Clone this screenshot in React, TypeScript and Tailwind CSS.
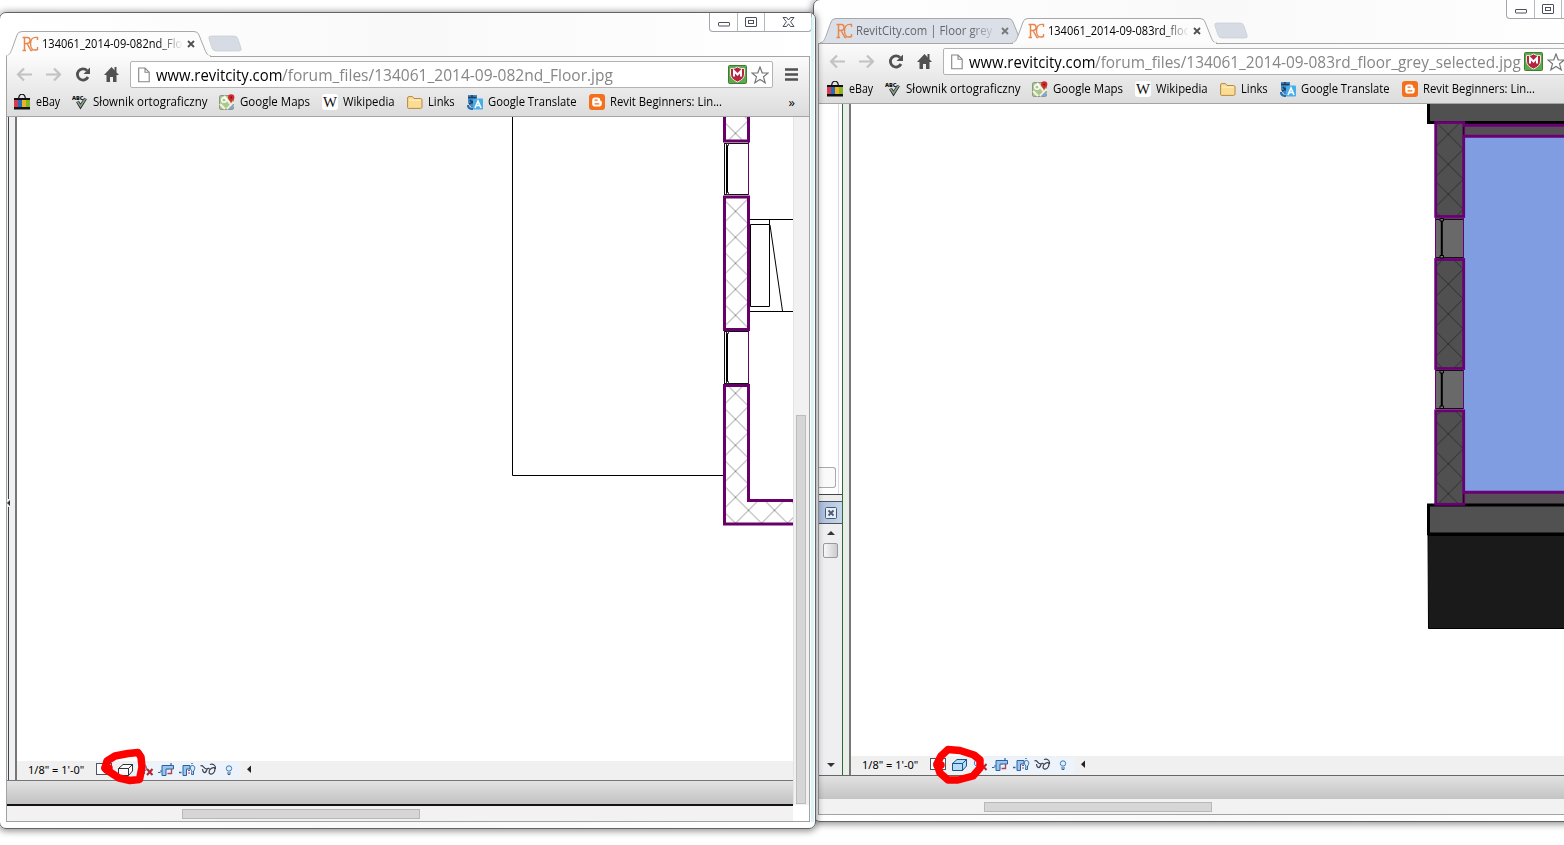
import { useLayoutEffect, useRef, useState } from "react";
import type { ReactNode } from "react";

/** Text squeezed or stretched horizontally to an exact width. */
function Fit({ w, children, className = "" }: { w: number; children: ReactNode; className?: string }) {
  const ref = useRef<HTMLSpanElement>(null);
  const [scale, setScale] = useState(1);
  useLayoutEffect(() => {
    if (ref.current && ref.current.offsetWidth) setScale(w / ref.current.offsetWidth);
  }, [w]);
  return (
    <span className={`block shrink-0 whitespace-nowrap ${className}`} style={{ width: w }}>
      <span ref={ref} className="inline-block origin-left" style={{ transform: `scaleX(${scale})` }}>
        {children}
      </span>
    </span>
  );
}

function RevitCityIcon() {
  return (
    <svg width="17" height="16" viewBox="0 0 17 16" className="shrink-0" fill="none" stroke="#e8874c">
      <path d="M2.5 1V15M.5 1.5H5.5C9 1.5 9 7.5 5 7.5H3M5 7.5L9 14.5H10.5M.5 14.5H4" strokeWidth="1.5" />
      <path d="M15.5 4V1.5C10 .5 8.5 4 8.5 8C8.5 13 11 15 15.5 13.5V11" strokeWidth="1.4" />
    </svg>
  );
}

function Tab({ title, w, textW, active, first }: { title: string; w: number; textW: number; active: boolean; first: boolean }) {
  const d = `M0 25C4 24 4 22 6 18L11 4Q12 .5 16 .5H${w - 17}Q${w - 13} .5 ${w - 12} 4L${w - 6} 19C${w - 4} 24 ${w - 3} 24.5 ${w} 25`;
  return (
    <div className={`relative h-[25px] shrink-0 ${first ? "" : "-ml-[13px]"}`} style={{ width: w }}>
      <svg className="absolute inset-0 overflow-visible" width={w} height="25">
        <path d={d} fill={active ? "#fcfcfd" : "#dbe0e8"} stroke="#a6a8ac" />
        {active && <path d={`M1 25.5H${w - 1}`} stroke="#fbfbfb" strokeWidth="2" />}
      </svg>
      <div className={`relative flex h-full items-center pl-4 ${active ? "text-black" : "text-[#62666c]"}`}>
        <RevitCityIcon />
        <div className="ml-[3px] w-[140px] overflow-hidden [mask-image:linear-gradient(to_right,black_115px,transparent_141px)]">
          <Fit w={textW} className="text-[12px] leading-[20px]">{title}</Fit>
        </div>
        <svg width="8" height="8" viewBox="0 0 8 8" className={`ml-[5px] shrink-0 ${active ? "stroke-[#505050]" : "stroke-[#777]"}`} strokeWidth="1.8">
          <path d="M1 1L7 7M7 1L1 7" />
        </svg>
      </div>
    </div>
  );
}

const bookmarks: { name: string; w: number; icon: ReactNode }[] = [
  {
    name: "eBay", w: 24,
    icon: <><path d="M4.5 5Q5 .2 8 .2Q11 .2 11.500 5" fill="none" stroke="#111" strokeWidth="1.3" /><path d="M0 4H16V15.500H0Z" fill="#111" /><path d="M0 6H4V13H0Z" fill="#d93a4c" /><path d="M4 6H8V13H4Z" fill="#266bc0" /><path d="M8 6H12V13H8Z" fill="#edb51b" /><path d="M12 6H16V13H12Z" fill="#86b526" /></>,
  },
  {
    name: "Słownik ortograficzny", w: 114,
    icon: <><text x="0" y="5.500" fontSize="5.500" fontWeight="900" fill="#111" textLength="11.500" lengthAdjust="spacingAndGlyphs">ABC</text><path d="M5.500 7.500L8.500 12.500L13.500 4.500" fill="none" stroke="#222" strokeWidth="3.200" /><path d="M5.500 7.500L8.500 12.300L13.500 4.500" fill="none" stroke="#87a58e" strokeWidth="1.600" /></>,
  },
  {
    name: "Google Maps", w: 70,
    icon: <><rect x=".5" y="1.5" width="14" height="14" rx="1.5" fill="#a9c98b" stroke="#8a9a86" /><path d="M1 10L6 15M8 15L15 8M5 2L14 13" stroke="#f5f0dc" strokeWidth="2.2" /><path d="M9 15L14 10V15Z" fill="#7da5d9" /><circle cx="5" cy="6" r="2.3" fill="none" stroke="#fff" strokeWidth="1.4" /><path d="M12 10C12 7 9 6 9 3.5A3.2 3.2 0 0 1 15.4 3.5C15.4 6 12 7 12 10Z" fill="#d42b2f" /><circle cx="12.2" cy="3.6" r="1" fill="#7e1115" /></>,
  },
  {
    name: "Wikipedia", w: 52,
    icon: <><rect width="16" height="16" rx="3" fill="#fff" /><text x="1" y="12.700" fontSize="14" fontFamily="Liberation Serif, serif" textLength="14" lengthAdjust="spacingAndGlyphs" fill="#111">W</text></>,
  },
  {
    name: "Links", w: 27,
    icon: <><path d="M.6 13.5V4Q.6 2.6 2 2.6H5.5L7 4.5H13.5Q15 4.5 15 6V13Q15 14.4 13.5 14.4H1.7Q.6 14.4 .6 13.5Z" fill="#fbdc94" stroke="#b68a41" /><path d="M2 6.2H13.5" stroke="#fff2c7" /></>,
  },
  {
    name: "Google Translate", w: 89,
    icon: <><path d="M1 1H10V10L5 14L1 9Z" fill="#4488bf" /><path d="M1 3.500H9.500M5 1V3.500M8 4Q6 9 2 10M3 6Q5 9 8 10" stroke="#173f66" strokeWidth="1.400" fill="none" /><path d="M1 11Q1 15 6 15" fill="none" stroke="#2470b3" strokeWidth="2.200" /><rect x="6" y="4.500" width="10" height="11" rx="1" fill="#48aee8" /><path d="M8 14L11 7L14 14M9 11.5H13" stroke="#fff" strokeWidth="1.6" fill="none" /></>,
  },
  {
    name: "Revit Beginners: Lin...", w: 112,
    icon: <><rect width="16" height="16" rx="3" fill="#f3701c" /><path d="M6 3.4H8.6Q11.2 3.4 11.2 6Q11.2 7 12 7Q12.800 7 12.800 8V9.5Q12.800 12.600 9.8 12.600H6Q3.2 12.600 3.2 9.8V6.3Q3.2 3.4 6 3.4Z" fill="#fff" /><path d="M6 6.1H8.2M6 9.9H9.8" stroke="#f3701c" strokeWidth="1.3" strokeLinecap="round" /></>,
  },
];

function Toolbar({ path, pathW, wide }: { path: string; pathW: number; wide: boolean }) {
  return (
    <div className={`flex h-[60px] flex-col border-b border-[#a4a4a4] bg-linear-to-b from-[#fbfbfb] to-[#dcdcdc] font-['Open_Sans',sans-serif] ${wide ? "pl-px" : ""}`}>
      <div className="flex h-[34px] shrink-0 items-center pt-px pl-[9px]">
        <svg width="106" height="18" viewBox="16 66 106 18" className="shrink-0" fill="none">
          <path d="M32 74.5H18.5M24 68.5L18 74.5L24 80.5" stroke="#c2c2c2" strokeWidth="2.2" />
          <path d="M46 74.5H59.5M54 68.5L60 74.5L54 80.5" stroke="#c2c2c2" strokeWidth="2.2" />
          <path d="M87 70.5A5.6 5.6 0 1 0 88 77" stroke="#515151" strokeWidth="2.8" />
          <path d="M90 67.5V74H83.5Z" fill="#515151" />
          <path d="M111.5 67L104 75H106.5V82H110V77H113V82H116.5V75H119Z" fill="#515151" />
          <path d="M115.500 67V72" stroke="#515151" strokeWidth="2" />
        </svg>
        <div className="ml-2 flex h-[27px] min-w-0 grow items-center rounded-xs border border-[#b3b3b3] bg-white pl-[7px]">
          <svg width="12" height="16" viewBox="0 0 12 16" className="shrink-0" fill="none" stroke="#868686" strokeWidth="1.1">
            <path d="M.7 1H7L11.2 5.2V14.8H.7ZM7 1V5.2H11.2" />
          </svg>
          <div className="ml-[6px] flex w-0 text-[16px] leading-[22px]">
            <Fit w={126} className="text-black">www.revitcity.com</Fit>
            <Fit w={pathW} className="text-[#868686]">{path}</Fit>
          </div>
          <svg width="19" height="19" viewBox="0 0 19 19" className="ml-auto shrink-0">
            <rect x=".5" y=".5" width="18" height="18" rx="1" fill="#5eaa4b" stroke="#398032" />
            <path d="M2.5 3.5Q7 4 9.5 2Q12 4 16.5 3.5V9Q16.5 14 9.5 17Q2.5 14 2.5 9Z" fill="#b52440" stroke="#f1e5e6" />
            <path d="M6 11.5V6L9.5 9.5L13 6V11.5" stroke="#fff" strokeWidth="2" fill="none" />
          </svg>
          <svg width="18" height="18" viewBox="0 0 18 18" className="mr-[3px] ml-[4px] shrink-0" fill="#fff" stroke="#777" strokeWidth="1.2">
            <path d="M9 1L11.2 6.8L17.2 7L12.5 10.8L14.2 16.8L9 13.4L3.8 16.8L5.5 10.8L.8 7L6.8 6.8Z" />
          </svg>
        </div>
        <svg width="13" height="13" viewBox="0 0 13 13" className="mr-[11px] ml-3 shrink-0" stroke="#505050" strokeWidth="2.6">
          <path d="M0 1.5H13M0 6.5H13M0 11.5H13" />
        </svg>
      </div>
      <div className="flex grow items-center pr-[14px] pb-[3px] pl-[7px] text-[12px] leading-[16px] text-black">
        {bookmarks.map((b, i) => (
          <div key={b.name} className={`flex shrink-0 items-center ${i === 0 ? "gap-[6px]" : "ml-3 gap-[5px]"}`}>
            <svg width="16" height="16" viewBox="0 0 16 16" className="shrink-0">{b.icon}</svg>
            <Fit w={b.w}>{b.name}</Fit>
          </div>
        ))}
        <span className="ml-auto text-[13px]">»</span>
      </div>
    </div>
  );
}

function CaptionButtons() {
  return (
    <div className="mr-[3px] ml-auto flex h-[19px] shrink-0 rounded-b-[4px] border border-t-0 border-[#a3a6ac] bg-white/60">
      <svg width="101" height="18" viewBox="710 13 101 18" fill="none" stroke="#4d505c">
        <path d="M737.5 13V31M764.5 13V31" stroke="#b4b7bc" />
        <rect x="718.5" y="22.5" width="11" height="3.5" rx=".5" fill="#fff" />
        <rect x="745.5" y="17.5" width="11" height="9" rx=".5" fill="#fff" />
        <rect x="748.5" y="20.5" width="5" height="3" />
        <path d="M783 17.5H786.5L788.5 20L790.5 17.5H794L790.6 21.8L794 26.5H790.5L788.5 23.8L786.5 26.5H783L786.4 21.8Z" fill="#fff" />
      </svg>
    </div>
  );
}

/** Revit's view control bar. */
function ViewBar({ solid }: { solid: boolean }) {
  return (
    <div className="flex h-[19px] items-center bg-[#f0f0f0] pb-[2px] pl-[11px] font-['Noto_Sans',sans-serif] text-[11px] leading-[16px] text-black">
      <Fit w={56}>1/8" = 1'-0"</Fit>
      <svg width="160" height="18" viewBox="95 760 160 18" className="ml-[11px] shrink-0" fill="none">
        <rect x="135" y="761" width="106" height="17" fill="#edf3fa" />
        <rect x="96.5" y="762.5" width="15" height="11" fill="#fff" stroke="#4d5666" />
        <g stroke={solid ? "#14568f" : "#30343b"} fill={solid ? "#b8dcf7" : "#fafafa"} strokeLinejoin="round">
          <path d="M118.5 767.5H128.5V774.5H118.5ZM118.5 767.5L123 763.5H132.5L128.5 767.5ZM128.5 774.5L132.5 770V763.5L128.5 767.5Z" />
        </g>
        <circle cx="143.500" cy="767" r="3.200" stroke="#4b84bd" />
        <path d="M142 772H145" stroke="#4b84bd" strokeWidth="2" />
        <path d="M147 768L152.500 774M152.500 768L147 774" stroke="#b6252d" strokeWidth="2" />
        <path d="M158 771.500H160.500M163 775V765.500H174M171 762V764M163 770H160M168 767V768.500" stroke="#2762a4" strokeWidth="1.200" />
        <path d="M162 774.500V764.500H173.500V768H166V774.500Z" fill="#9cc4ec" stroke="#2762a4" />
        <path d="M167.500 772.500H171.500V768" stroke="#b44255" strokeWidth="1.400" />
        <path d="M179 771.500H181.500M192 762V763" stroke="#2762a4" strokeWidth="1.400" />
        <path d="M183 774.500V764.500H190V768H186.500V774.500Z" fill="#9cc4ec" stroke="#2762a4" />
        <path d="M188 772H190M188 769.500H190" stroke="#b44255" strokeWidth="1.200" />
        <path d="M192 770C189.500 768 190 764.500 192.500 764.500C195 764.500 195.500 768 193.500 770V773.500H191.500Z" fill="#d8ecff" stroke="#2b65a4" />
        <path d="M200.500 765C203.500 763 203 768 207 768C206 772.500 203 773 202.500 768M207 768Q208.500 766.500 210 768.500M210 768.500C207 773 212 775 214.500 770.500C216 766 213 765.500 210 768.500M215.500 768C216 764 213 762.500 210 763.500" stroke="#3f4350" strokeWidth="1.200" />
        <circle cx="229" cy="767.500" r="2.700" fill="#dff0ff" stroke="#3d79b7" />
        <path d="M228 771V773.500H230V771" stroke="#345f91" />
        <path d="M251 764.500V772L247 768.200Z" fill="#222" />
      </svg>
    </div>
  );
}

function Hatch({ id, x, y, size, color }: { id: string; x: number; y: number; size: number; color: string }) {
  return (
    <pattern id={id} x={x} y={y} width={size} height={size} patternUnits="userSpaceOnUse">
      <path d={`M0 0L${size} ${size}M${size} 0L0 ${size}`} stroke={color} strokeWidth=".8" />
    </pattern>
  );
}

function SecondFloorPlan() {
  return (
    <svg width="776" height="644" viewBox="17 117 776 644" className="block shrink-0" fill="none">
      <defs><Hatch id="wallLight" x={735.5} y={133.3} size={26} color="#777" /></defs>
      <path d="M512.5 117V475.5H724M750 219.5H793M750 311.5H793M750.5 224.500H769.500V306.500H750.500ZM769.500 219V225M770 225L782.500 311" stroke="#000" />
      <g fill="url(#wallLight)" stroke="#690069" strokeWidth="3">
        <path d="M724.5 110H748.500V141H724.500Z" />
        <path d="M724.500 197H748.500V329.500H724.500Z" />
        <path d="M800 500.500H748.500V385.500H724.500V524H800" />
      </g>
      <path d="M748.500 142V195M748.500 331V384" stroke="#690069" />
      <path d="M724.500 143V195M724 143.500H748M724 194.500H748M724.500 332V384M724 331.500H748M724 383.500H748" stroke="#111" />
      <path d="M727 144V194M727 332V383" stroke="#000" strokeWidth="2" />
      <path d="M726.500 143.500H728.500V145.500H726.500ZM726.500 192.500H728.500V194.500H726.500ZM726.500 331.500H728.500V333.500H726.500ZM726.500 381.500H728.500V383.500H726.500Z" fill="#fff" stroke="#111" strokeWidth=".8" />
    </svg>
  );
}

function ThirdFloorPlan() {
  return (
    <svg width="762" height="652" viewBox="851 104 762 652" className="block shrink-0" fill="none">
      <defs><Hatch id="wallDark" x={1448.3} y={134.3} size={29.95} color="#262626" /></defs>
      <path d="M1428.500 100H1613V122.500H1428.500Z" fill="#505050" stroke="#000" strokeWidth="3" />
      <path d="M1464 124H1613V506H1464Z" fill="#809de2" />
      <path d="M1464 124H1613V136H1464ZM1464 493H1613V504H1464Z" fill="#565056" />
      <path d="M1464 125.200H1613M1464 136.300H1613M1464 492.300H1613" stroke="#690073" strokeWidth="3" />
      <path d="M1428.500 505H1613V534H1428.500Z" fill="#515151" stroke="#000" strokeWidth="3" />
      <path d="M1428 535.500H1613V628.500H1428.500Z" fill="#1a1a1a" stroke="#000" />
      <path d="M1435.500 218H1463.500V258H1435.500ZM1435.500 370H1463.500V409H1435.500Z" fill="#696969" stroke="#690073" />
      {[[122.5, 94], [259.500, 109], [410.800, 93.500]].map(([y, h]) => (
        <g key={y}>
          <rect x="1435.700" y={y} width="28" height={h} fill="#505050" />
          <rect x="1435.700" y={y} width="28" height={h} fill="url(#wallDark)" stroke="#690073" strokeWidth="2.800" />
        </g>
      ))}
      <path d="M1463.500 127V135M1463.500 494V503M1436 219.500H1463M1436 257.500H1463M1436 370.500H1463M1436 408.500H1463" stroke="#111" />
      <path d="M1441.800 221V256M1441.800 372V407" stroke="#000" strokeWidth="2" />
      <path d="M1440 218.500H1443.500V221H1440ZM1440 255.500H1443.500V258H1440ZM1440 370.500H1443.500V373H1440ZM1440 406H1443.500V408.500H1440Z" stroke="#000" fill="#777" />
    </svg>
  );
}

function Window({
  className, frame, tabs, path, pathW, wide = false, children,
}: {
  className: string;
  frame: string;
  tabs: { title: string; w: number; textW: number; active: boolean }[];
  path: string;
  pathW: number;
  wide?: boolean;
  children: ReactNode;
}) {
  return (
    <section className={`absolute flex flex-col rounded-[7px] border border-[#606468] bg-linear-to-r from-white via-[#f9f9f9] to-white shadow-[0_1px_7px_1px_rgba(0,0,0,0.45)] ${className}`}>
      <div className="flex h-[43px] shrink-0 pl-[6px]">
        <div className="flex h-full items-end font-['Open_Sans',sans-serif]">
          {tabs.map((t, i) => <Tab key={t.title} {...t} first={i === 0} />)}
          <svg width="34" height="25" viewBox="0 0 34 25" className="-ml-[3px]">
            <path d="M1 8Q0 5 3 5H26Q29 5 30 8L33 17Q34 20 31 20H8Q5 20 4 17Z" fill="#d7dce4" stroke="#c6cbd2" strokeWidth=".7" />
          </svg>
        </div>
        <CaptionButtons />
      </div>
      <div className={`flex min-h-0 grow flex-col border-t border-[#a5a5a5] pb-[6px] ${frame}`}>
        <div className="flex min-h-0 grow flex-col border-x border-b border-[#a2a2a2] bg-white">
          <Toolbar path={path} pathW={pathW} wide={wide} />
          {children}
        </div>
      </div>
    </section>
  );
}

function RevitSidePanel() {
  return (
    <div className="flex w-[32px] shrink-0">
      <div className="flex w-[24px] flex-col border-r border-[#2d6a35]">
        <div className="flex h-[391px] items-end border-b border-[#444] bg-white pb-[6px]">
          <div className="h-[21px] w-[17px] rounded-r-[3px] border border-l-0 border-[#aaa] bg-[#fafafa]" />
          <div className="-mb-[6px] ml-[2px] w-px self-stretch bg-[#ded7e5]" />
        </div>
        <div className="h-[6px] bg-[#eee]" />
        <div className="flex h-[23px] items-center justify-center border-y border-[#50535a] bg-linear-to-r from-[#a8bddd] to-[#c7d7eb]">
          <svg width="12" height="12" viewBox="0 0 12 12" fill="none" stroke="#4b5a73">
            <rect x=".5" y=".5" width="11" height="11" rx="1" fill="#e6eef8" />
            <path d="M3.500 3.500L8.500 8.500M8.500 3.500L3.500 8.500" strokeWidth="1.800" />
          </svg>
        </div>
        <div className="flex grow flex-col items-center bg-[#efeff2] pt-[6px] pb-[7px]">
          <svg width="8" height="5"><path d="M0 5L4 1L8 5Z" fill="#333" /></svg>
          <div className="mt-[8px] h-[15px] w-[15px] rounded-xs border border-[#999] bg-linear-to-r from-[#f8f8f8] to-[#ccc]" />
          <svg width="8" height="5" className="mt-auto"><path d="M0 0L4 4L8 0Z" fill="#333" /></svg>
        </div>
      </div>
      <div className="w-[8px] border-r-2 border-[#777] bg-[#e9eee8]" />
    </div>
  );
}

export default function App() {
  return (
    <main className="relative h-[845px] w-[1564px] overflow-hidden bg-white">
      <Window
        className="-top-px left-[813px] h-[823px] w-[800px]"
        frame="mr-[6px] ml-[4px]"
        wide
        tabs={[
          { title: "RevitCity.com | Floor grey", w: 205, textW: 136, active: false },
          { title: "134061_2014-09-083rd_floor", w: 205, textW: 147, active: true },
        ]}
        path="/forum_files/134061_2014-09-083rd_floor_grey_selected.jpg"
        pathW={426}
      >
        <div className="flex min-h-0 grow flex-col overflow-hidden">
          <div className="flex h-[671px] shrink-0">
            <RevitSidePanel />
            <div className="flex grow flex-col overflow-hidden">
              <ThirdFloorPlan />
              <ViewBar solid />
            </div>
          </div>
          <div className="h-[24px] shrink-0 border-t border-[#666] bg-linear-to-b from-[#e2e2e2] to-[#c4c4c4]" />
          <div className="flex grow items-center bg-[#f2f2f2] pl-[165px]">
            <div className="h-[10px] w-[228px] border border-[#b8b8b8] bg-[#d6d6d6]" />
          </div>
        </div>
      </Window>

      <Window
        className="top-[12px] -left-px h-[817px] w-[817px]"
        frame="mr-[5px] ml-[6px]"
        tabs={[{ title: "134061_2014-09-082nd_Floor", w: 205, textW: 151, active: true }]}
        path="/forum_files/134061_2014-09-082nd_Floor.jpg"
        pathW={331}
      >
        <div className="flex min-h-0 grow">
          <div className="flex w-[786px] flex-col overflow-hidden">
            <div className="flex h-[663px] shrink-0">
              <div className="flex w-[10px] shrink-0 flex-col border-r-2 border-[#777] bg-[#eef0f2] pl-px">
                <div className="grow border-l border-[#444]" />
                <svg width="4" height="8" className="-ml-px shrink-0"><path d="M3 1L0 4L3 7Z" fill="#333" /></svg>
                <div className="h-[273px] border-l border-[#444]" />
              </div>
              <div className="flex grow flex-col">
                <SecondFloorPlan />
                <ViewBar solid={false} />
              </div>
            </div>
            <div className="h-[26px] shrink-0 border-t border-b-2 border-t-[#777] border-b-[#171016] bg-linear-to-b from-[#e2e2e2] to-[#c2c2c2]" />
            <div className="flex grow items-center bg-[#f2f2f2] pl-[175px]">
              <div className="h-[10px] w-[238px] border border-[#b8b8b8] bg-[#d6d6d6]" />
            </div>
          </div>
          <div className="flex grow flex-col bg-white">
            <div className="flex h-[688px] border-l border-[#e4e4e4] bg-[#f1f1f1] pt-[298px] pl-[2px]">
              <div className="h-[389px] w-[10px] border border-[#bdbdbd] bg-[#d6d6d6]" />
            </div>
          </div>
        </div>
      </Window>

      <svg className="pointer-events-none absolute inset-0" width="1564" height="845" fill="none">
        <path d="M812.500 17V822" stroke="#d3f1f4" strokeWidth="3" opacity=".8" />
        <g stroke="#f00" strokeWidth="7.500" strokeLinejoin="round">
          <path d="M105 768L107 761L115 756L128 753.500L138 752.500L141 757L142 767L139.500 779.500L130 780.500L119 778L106 769.500Z" />
          <path d="M937 764L941 756L948 749.500L960 750.500L974 755L980 760L980 768L973 776L958 780L948 780L940 773Z" />
          <path d="M105 768H109M937 765H941" strokeLinecap="round" />
        </g>
      </svg>
    </main>
  );
}
